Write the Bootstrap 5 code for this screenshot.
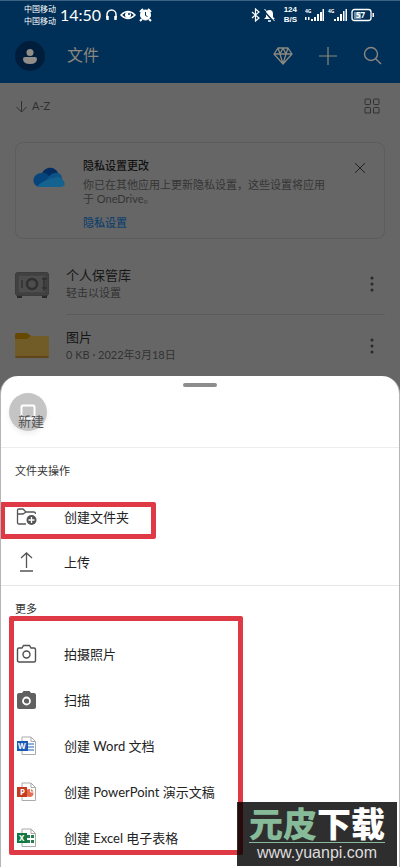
<!DOCTYPE html>
<html lang="zh-CN">
<head>
<meta charset="utf-8">
<meta name="viewport" content="width=device-width, initial-scale=1">
<title>文件</title>
<link href="https://cdn.jsdelivr.net/npm/bootstrap@5.3.0/dist/css/bootstrap.min.css" rel="stylesheet">
<style>
body{font-family:Lato,"Noto Sans CJK SC",sans-serif;background:#666;color:#161616;font-size:13px;line-height:18px}
button{background:none;border:0;padding:0;color:inherit;text-align:left}
svg{display:block;flex:none}
.app-head{background:#003057;border-top:1px solid #3c6182}
.status{height:28px;color:#fff;padding-left:24px;padding-right:23px}
.carrier{font-size:8px;line-height:12px}
.clock{font:16px/20px Lato,sans-serif}
.speed{font:bold 8px/10px "Liberation Sans",sans-serif}
.toolbar{height:54px;color:#8b8780;padding-left:15px;padding-right:17px}
.app-title{font-size:16px;line-height:24px;margin:0 auto 2px 22px;font-weight:400}
.avatar{width:30px;height:30px;background:#001e3b}
.tools{gap:25px}
.sortbar{height:46px;padding-left:15px;padding-right:20px;color:#303030}
.sort-name{font-size:11px}
.notice{margin:13px 15px 0;border:1px solid #5c5c5c;border-radius:8px;height:97px;padding:15px 18px 0 17px}
.notice-text{margin-left:17px}
.notice-title{font-size:11px;line-height:16px;font-weight:500;margin:0;color:#111}
.notice-body{font-size:11px;line-height:14px;margin:4px 0 0;padding-right:12px;color:#353535}
.notice-link{font-size:11px;line-height:14px;margin-top:10px;color:#12426c;font-weight:500;text-decoration:none}
.file-row{height:61px;padding-left:15px}
.file-main{margin-left:17px;margin-right:15px;padding-right:10px;height:61px;border-bottom:1px solid #5b5b5b}
.file-last{border-bottom:0}
.file-name{font-size:13px;line-height:18px}
.file-info{font-size:11px;line-height:18px;color:#323232}
.files{margin-top:15px}
.sheet{background:#fff;border:1px solid #b5b5b5;border-top:0;border-radius:18px 18px 0 0;color:#222}
.grip{width:34px;height:4px;background:#8d8d8d;border-radius:2px;margin:7px auto 0}
.sheet-head{height:61px;border-bottom:1px solid #ededed;padding:6px 0 0 8px}
.new-icon{width:38px;height:38px;background:#c4c4c4;box-shadow:0 3px 5px #0001}
.new-label{left:17px;top:28px;font-size:13px;color:#555}
.group-title{font-size:11px;line-height:16px;margin:0;padding-left:14px;color:#333;font-weight:400}
.folder-group{padding-top:15px;height:138px;border-bottom:1px solid #e7e7e7}
.more-group{padding-top:15px;height:281px}
.folder-group .group-title{margin-bottom:15px}
.more-group .group-title{margin-bottom:14px}
.act{height:46px;padding-left:15px;gap:26px}
.folder-group .act{height:45px}
.frame{border:5px solid #df3946;border-radius:2px;pointer-events:none}
.frame-one{left:-1px;top:54px;width:156px;height:37px}
.frame-two{left:8px;top:30px;width:234px;height:239px}
.brand{right:2px;bottom:1px;width:160px;height:64px;background:#000000d1;padding:4px 12px 0;color:#fff}
.brand-name{font-size:34px;line-height:36px;font-weight:900;white-space:nowrap;border-bottom:1px solid #8ab99d}
.brand-name span{color:#86ba98}
.brand-url{font:16px/19px "Liberation Sans",sans-serif;color:#ddd}
.office{font:bold 8px "Noto Sans",sans-serif;fill:#fff}
.tiny{font:bold 5px "Noto Sans",sans-serif}
.pct{font:bold 8px "Noto Sans",sans-serif}
</style>
<script src="https://cdn.jsdelivr.net/npm/bootstrap@5.3.0/dist/js/bootstrap.bundle.min.js"></script>
</head>
<body>
<header class="app-head">
  <div class="status d-flex align-items-center justify-content-between">
    <div class="d-flex align-items-center">
      <div class="carrier">中国移动<br>中国移动</div>
      <span class="clock mx-1">14:50</span>
      <svg width="48" height="14" viewBox="0 0 48 14" fill="none" stroke="#fff">
        <path d="M2 10V6.500a4.500 4.500 0 0 1 9 0V10" stroke-width="1.500"/><path d="M2.500 8v4M10.500 8v4" stroke-width="2.500"/>
        <path d="M16 7Q23 0 30 7Q23 14 16 7Z" stroke-width="1.500"/><circle cx="23" cy="7" r="3" fill="#fff" stroke="none"/><circle cx="24" cy="6" r="1" fill="#003057" stroke="none"/>
        <circle cx="40.500" cy="7" r="5" fill="#fff"/><path d="M35 4l3-3M43 1l3 3M37 11l-2 2M44 11l2 2" stroke-width="2"/><path d="M40.500 4v3.500l2 1" stroke="#003057"/>
      </svg>
    </div>
    <div class="d-flex align-items-center">
      <svg width="25" height="14" viewBox="0 0 25 14" fill="none" stroke="#fff"><path d="M1 4l7 6-3.500 3V1L8 4 1 10" stroke-width="1.200"/><path d="M13 11h11l-2-2V6q0-4-3.500-4T15 6v3z" fill="#fff" stroke="none"/><path d="M17 13h3" stroke-width="1.500"/><path d="M12 2l11 12" stroke="#003057" stroke-width="1.500"/><path d="M13.500 1l10 12"/></svg>
      <div class="speed text-center mx-1 ps-1">124<br>B/S</div>
      <svg class="ms-1" width="72" height="14" viewBox="0 0 72 14" fill="#fff"><text class="tiny" x="0" y="5">4G</text><path d="M0 9h1.500v3H0zM3 9h1.500v3H3zM6 11h2v2H6zM9 9h2v4H9zM12 6h2v7h-2zM15 4h2v9h-2zM17.500 1H19v12h-1.500z"/><text class="tiny" x="23" y="5">4G</text><path d="M29 11h2v2h-2zM32 9h2v4h-2zM35 6h2v7h-2zM38 3h1.500v10H38zM40.500 1H42v12h-1.500z"/><rect x="47" y="1.500" width="19" height="11" rx="2.500" fill="none" stroke="#fff" stroke-width="1.300"/><path d="M49 4h7v7h-7z" fill="#6d8da6"/><text class="pct" x="51" y="10">57</text><path d="M67.500 5h1.500v4h-1.500z"/></svg>
    </div>
  </div>
  <div class="toolbar d-flex align-items-center">
    <button class="avatar rounded-circle d-flex align-items-center justify-content-center" aria-label="账户"><svg width="16" height="16" viewBox="0 0 16 16" fill="#918d89"><circle cx="8" cy="4.500" r="3.500"/><path d="M1 11q0-2 2-2h10q2 0 2 2 0 5-7 5t-7-5z"/></svg></button>
    <h1 class="app-title">文件</h1>
    <div class="tools d-flex align-items-center">
    <button aria-label="高级版"><svg width="20" height="20" viewBox="0 0 20 20" fill="none" stroke="currentColor" stroke-width="1.300" stroke-linejoin="round"><path d="M5 2h10l4 6-9 10L1 8zM1 8h18M5 2l2 6 3 10 3-10 2-6M7 8l3-6 3 6"/></svg></button>
    <button aria-label="添加"><svg width="20" height="20" viewBox="0 0 20 20" stroke="currentColor" stroke-width="1.200"><path d="M10 1v18M1 10h18"/></svg></button>
    <button aria-label="搜索"><svg width="20" height="20" viewBox="0 0 20 20" fill="none" stroke="currentColor" stroke-width="1.400"><circle cx="8" cy="8" r="6.500"/><path d="M12.700 12.700L18 18"/></svg></button>
    </div>
  </div>
</header>
<main>
  <div class="sortbar d-flex align-items-center justify-content-between">
    <button class="d-flex align-items-center gap-1 sort-name"><svg width="13" height="13" viewBox="0 0 13 13" fill="none" stroke="currentColor"><path d="M6.500 1v11M1.500 7l5 5 5-5"/></svg>A-Z</button>
    <button aria-label="网格视图"><svg width="16" height="16" viewBox="0 0 16 16" fill="none" stroke="currentColor"><rect x="1" y="1" width="5.500" height="5.500" rx="1"/><rect x="9.500" y="1" width="5.500" height="5.500" rx="1"/><path d="M1 15v-4.500q0-1 1-1h3.500q1 0 1 1V15zM9.500 15v-4.500q0-1 1-1H14q1 0 1 1V15z"/></svg></button>
  </div>
  <section class="notice d-flex align-items-start">
    <svg class="mt-2" width="33" height="22" viewBox="0 0 33 22"><path d="M9 8C11 1 21-1 25 7l-4 8z" fill="#032d61"/><path d="M8 21C-2 21-2 8 8 7q5-1 9 4l8 9z" fill="#07447c"/><path d="M13 14q6-9 12-7 4 1 4 6l-6 5z" fill="#0d5388"/><path d="M4 20q8-7 17-8 5-3 9 2 5 7-4 7H8q-3 0-4-1z" fill="#14628f"/></svg>
    <div class="notice-text flex-grow-1">
      <h2 class="notice-title">隐私设置更改</h2>
      <p class="notice-body">你已在其他应用上更新隐私设置，这些设置将应用于 OneDrive。</p>
      <a class="notice-link d-inline-block" href="#">隐私设置</a>
    </div>
    <button class="mt-1 ms-3" aria-label="关闭"><svg width="12" height="12" viewBox="0 0 12 12" stroke="#222"><path d="M1 1l10 10M11 1L1 11"/></svg></button>
  </section>
  <section class="files">
    <div class="file-row d-flex align-items-center">
      <svg width="34" height="26" viewBox="0 0 34 26"><path d="M2 22h5v4H2zM27 22h5v4h-5z" fill="#292929"/><rect x=".5" y=".5" width="33" height="23" rx="2" fill="#424242" stroke="#3b3b3b"/><rect x="3" y="3" width="28" height="18" fill="#4d4d4d" stroke="#3d3d3d"/><circle cx="17" cy="12" r="5" fill="none" stroke="#303030" stroke-width="2.500"/><path d="M7 8v8M29 5v14M27 7h5M27 16h5" stroke="#303030" stroke-width="1.500"/></svg>
      <div class="file-main flex-grow-1 d-flex align-items-center justify-content-between">
        <div><div class="file-name">个人保管库</div><div class="file-info">轻击以设置</div></div>
        <button aria-label="更多选项"><svg width="6" height="16" viewBox="0 0 6 16" fill="#292929"><circle cx="3" cy="2" r="1.500"/><circle cx="3" cy="8" r="1.500"/><circle cx="3" cy="14" r="1.500"/></svg></button>
      </div>
    </div>
    <div class="file-row d-flex align-items-center">
      <svg width="34" height="26" viewBox="0 0 34 26"><path d="M0 2Q0 0 2 0h10l4 3-3 5H0z" fill="#674800"/><path d="M0 6h12l4-3h16q2 0 2 2v18q0 2-2 2H2q-2 0-2-2z" fill="#715b26"/><path d="M0 23q0 2 2 2h30q2 0 2-2z" fill="#604616"/></svg>
      <div class="file-main file-last flex-grow-1 d-flex align-items-center justify-content-between">
        <div><div class="file-name">图片</div><div class="file-info">0 KB · 2022年3月18日</div></div>
        <button aria-label="更多选项"><svg width="6" height="16" viewBox="0 0 6 16" fill="#292929"><circle cx="3" cy="2" r="1.500"/><circle cx="3" cy="8" r="1.500"/><circle cx="3" cy="14" r="1.500"/></svg></button>
      </div>
    </div>
  </section>
</main>
<div class="sheet position-relative overflow-hidden">
  <div class="grip"></div>
  <div class="sheet-head position-relative">
    <div class="new-icon rounded-circle d-flex align-items-center justify-content-center"><svg width="16" height="16" viewBox="0 0 16 16" fill="none" stroke="#fff" stroke-width="2"><rect x="1.500" y="1.500" width="13" height="13" rx="1.500"/></svg></div>
    <span class="new-label position-absolute lh-1">新建</span>
  </div>
  <section class="folder-group position-relative">
    <h2 class="group-title">文件夹操作</h2>
    <button class="act d-flex align-items-center w-100"><svg width="22" height="20" viewBox="0 0 22 20" fill="none" stroke="#555" stroke-width="1.300"><path d="M10 17H3q-1.500 0-1.500-1.500V3Q1.500 2 3 2h4l3 3h8q1.500 0 1.500 2M1.500 7H7l3-2"/><circle cx="15.500" cy="13" r="5" fill="#555" stroke="none"/><path d="M15.500 10v6M12.500 13h6" stroke="#fff"/></svg>创建文件夹</button>
    <button class="act d-flex align-items-center w-100"><svg width="22" height="20" viewBox="0 0 22 20" fill="none" stroke="#555" stroke-width="1.300"><path d="M10.500 16V1M5 6l5.500-5L16 6M4 19h13"/></svg>上传</button>
    <div class="frame frame-one position-absolute"></div>
  </section>
  <section class="more-group position-relative">
    <h2 class="group-title">更多</h2>
    <button class="act d-flex align-items-center w-100"><svg width="22" height="20" viewBox="0 0 22 20" fill="none" stroke="#505050" stroke-width="1.400"><path d="M3 4h3l1.500-2.500h6L15 4h3q1.500 0 1.500 1.500v11Q19.500 18 18 18H3q-1.500 0-1.500-1.500v-11Q1.500 4 3 4z"/><circle cx="10.500" cy="10.500" r="3.500"/></svg>拍摄照片</button>
    <button class="act d-flex align-items-center w-100"><svg width="22" height="20" viewBox="0 0 22 20" fill="#606060"><path d="M3 3h3l1.500-2h6L15 3h3q2 0 2 2v12q0 2-2 2H3q-2 0-2-2V5q0-2 2-2z"/><circle cx="10.500" cy="11" r="3.500" fill="none" stroke="#fff" stroke-width="1.800"/></svg>扫描</button>
    <button class="act d-flex align-items-center w-100"><svg width="22" height="20" viewBox="0 0 22 20"><path d="M6 1h9l4.500 4.500v13H6zM15 1v4.500h4.500" fill="#fff" stroke="#aaa"/><path d="M12 8h6M12 11h6M12 14h6" stroke="#6398cf" stroke-width="1.500"/><path d="M1 5h11v10H1z" fill="#195bb3"/><text class="office" x="2" y="13">W</text></svg>创建 Word 文档</button>
    <button class="act d-flex align-items-center w-100"><svg width="22" height="20" viewBox="0 0 22 20"><path d="M6 1h9l4.500 4.500v13H6zM15 1v4.500h4.500" fill="#fff" stroke="#aaa"/><circle cx="13.500" cy="11" r="4" fill="#e66c52"/><path d="M14.500 6v4H18" stroke="#fff" fill="none"/><path d="M1 5h10v10H1z" fill="#c43b20"/><text class="office" x="4" y="13">P</text></svg>创建 PowerPoint 演示文稿</button>
    <button class="act d-flex align-items-center w-100"><svg width="22" height="20" viewBox="0 0 22 20"><path d="M6 1h9l4.500 4.500v13H6zM15 1v4.500h4.500" fill="#fff" stroke="#aaa"/><path d="M11 7h3v3h-3zM15 7h3v3h-3zM11 12h3v3h-3zM15 12h3v3h-3z" fill="#267d50"/><path d="M1 5h10v10H1z" fill="#117a43"/><text class="office" x="3" y="13">X</text></svg>创建 Excel 电子表格</button>
    <div class="frame frame-two position-absolute"></div>
  </section>
  <aside class="brand position-absolute"><div class="brand-name"><span>元皮</span>下载</div><div class="brand-url text-center">www.yuanpi.com</div></aside>
</div>
</body>
</html>
